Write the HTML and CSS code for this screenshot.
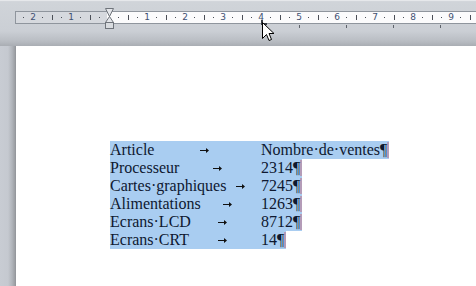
FILE: index.html
```html
<!DOCTYPE html>
<html>
<head>
<meta charset="utf-8">
<link rel="stylesheet" href="styles.css">
</head>
<body>
<div class="top">
  <div class="ruler">
    <div class="ruler-nums">
      <span>2</span><span>1</span><span></span><span>1</span><span>2</span><span>3</span><span>4</span><span>5</span><span>6</span><span>7</span><span>8</span><span>9</span><span></span>
    </div>
  </div>
  <svg class="indent" width="10" height="22" viewBox="0 0 10 22">
    <path d="M0.5 0.5 H8.5 L4.5 8.5 Z" fill="#e4e6ea" stroke="#6f747b"/>
    <path d="M4.5 8.5 L8.5 14.5 H0.5 Z" fill="#e4e6ea" stroke="#6f747b"/>
    <rect x="0.5" y="14.5" width="8" height="6" fill="#d9dce0" stroke="#6f747b"/>
  </svg>
  <div class="tabstops">
    <span class="tab-default t1"></span>
    <span class="tab-default t2"></span>
    <span class="tab-default t3"></span>
    <span class="tab-default t4"></span>
  </div>
  <svg class="tab-left" width="6" height="5" viewBox="0 0 6 5">
    <path d="M0 0 H2 V3 H6 V5 H0 Z" fill="#3a3f47"/>
  </svg>
  <svg class="cursor" width="13" height="21" viewBox="0 0 13 21">
    <path d="M0.5 0.5 V16.5 L4.5 12.5 L7 18.5 L9.5 17.5 L7 11.5 H12 Z" fill="#fff" stroke="#000" stroke-width="1" stroke-linejoin="miter"/>
  </svg>
</div>
<div class="workspace">
  <div class="shadow-left"></div>
  <div class="page">
    <div class="table">
      <div class="row"><span class="key"><span class="label">Article</span><span class="tab"><svg width="9" height="5" viewBox="0 0 9 5"><path d="M0 2 H6 V0 L9 2.5 L6 5 V3 H0 Z" fill="#111"/></svg></span></span><span class="val">Nombre·de·ventes<span class="pil">¶</span></span></div>
      <div class="row"><span class="key"><span class="label">Processeur</span><span class="tab"><svg width="9" height="5" viewBox="0 0 9 5"><path d="M0 2 H6 V0 L9 2.5 L6 5 V3 H0 Z" fill="#111"/></svg></span></span><span class="val">2314<span class="pil">¶</span></span></div>
      <div class="row"><span class="key"><span class="label">Cartes·graphiques</span><span class="tab"><svg width="9" height="5" viewBox="0 0 9 5"><path d="M0 2 H6 V0 L9 2.5 L6 5 V3 H0 Z" fill="#111"/></svg></span></span><span class="val">7245<span class="pil">¶</span></span></div>
      <div class="row"><span class="key"><span class="label">Alimentations</span><span class="tab"><svg width="9" height="5" viewBox="0 0 9 5"><path d="M0 2 H6 V0 L9 2.5 L6 5 V3 H0 Z" fill="#111"/></svg></span></span><span class="val">1263<span class="pil">¶</span></span></div>
      <div class="row"><span class="key"><span class="label">Ecrans·LCD</span><span class="tab"><svg width="9" height="5" viewBox="0 0 9 5"><path d="M0 2 H6 V0 L9 2.5 L6 5 V3 H0 Z" fill="#111"/></svg></span></span><span class="val">8712<span class="pil">¶</span></span></div>
      <div class="row"><span class="key"><span class="label">Ecrans·CRT</span><span class="tab"><svg width="9" height="5" viewBox="0 0 9 5"><path d="M0 2 H6 V0 L9 2.5 L6 5 V3 H0 Z" fill="#111"/></svg></span></span><span class="val">14<span class="pil">¶</span></span></div>
    </div>
  </div>
</div>
</body>
</html>
```
FILE: styles.css
```css
html, body {
  margin: 0;
  padding: 0;
}
body {
  width: 476px;
  height: 286px;
  overflow: hidden;
  background: #c8ccd3;
  font-family: "Liberation Serif", "Times New Roman", serif;
  display: flex;
  flex-direction: column;
}
.top {
  position: relative;
  height: 46px;
  flex: none;
  padding-top: 10px;
  padding-left: 15px;
  box-sizing: border-box;
  background: linear-gradient(to bottom, #d5d8dd 0, #d0d4d9 1px, #cbcfd5 30px, #b9bdc3 40px, #a6aab0 46px);
  border-top: 1px solid #e6e8eb;
}
.ruler {
  height: 11px;
  border: 1px solid #8f959d;
  border-right: none;
  background:
    linear-gradient(to right, transparent 0 19px, #4b4f57 19px 20px, transparent 20px) 17px 3px / 38px 5px repeat-x,
    linear-gradient(to right, transparent 0 9px, #4b4f57 9px 10px, transparent 10px 28px, #4b4f57 28px 29px, transparent 29px) 17px 5px / 38px 1px repeat-x,
    linear-gradient(to right, #d6d9de 0 91px, #fbfbfc 91px);
  overflow: hidden;
}
.ruler-nums {
  display: flex;
  margin-left: -2px;
  height: 11px;
  align-items: center;
}
.ruler-nums span {
  flex: none;
  width: 38px;
  text-align: center;
  font-family: "DejaVu Sans", sans-serif;
  font-size: 9px;
  line-height: 11px;
  color: #3e5173;
}
.indent {
  position: absolute;
  left: 105px;
  top: 7px;
}
.tabstops {
  position: absolute;
  left: 0;
  top: 24px;
  width: 476px;
  height: 4px;
}
.tab-default {
  position: absolute;
  top: 0;
  width: 1px;
  height: 3px;
  background: #5e636b;
}
.t1 { left: 299px; }
.t2 { left: 346px; }
.t3 { left: 393px; }
.t4 { left: 440px; }
.tab-left {
  position: absolute;
  left: 261px;
  top: 19px;
}
.cursor {
  position: absolute;
  left: 262px;
  top: 21px;
}
.workspace {
  flex: 1;
  display: flex;
  min-height: 0;
}
.shadow-left {
  width: 16px;
  flex: none;
  background: linear-gradient(to right, #c8ccd3 0, #c5c9d0 8px, #b1b5bb 12px, #9b9ea3 15px, #8f9297 16px);
}
.page {
  flex: 1;
  background: #fff;
  padding-top: 95px;
  padding-left: 94px;
}
.table {
  display: flex;
  flex-direction: column;
  font-size: 16px;
  line-height: 18px;
  color: #0e1830;
}
.row {
  display: flex;
  width: max-content;
  background: #a9cdf1;
  height: 18px;
  align-items: center;
}
.key {
  display: flex;
  width: 151px;
  flex: none;
  align-items: center;
}
.label {
  white-space: nowrap;
}
.tab {
  flex: 1;
  display: flex;
  justify-content: center;
  align-items: center;
  padding-right: 6px;
}
.val {
  white-space: nowrap;
}
.pil {
  display: inline-block;
  border-right: 2px solid #b49cb8;
  line-height: 16px;
}
```
